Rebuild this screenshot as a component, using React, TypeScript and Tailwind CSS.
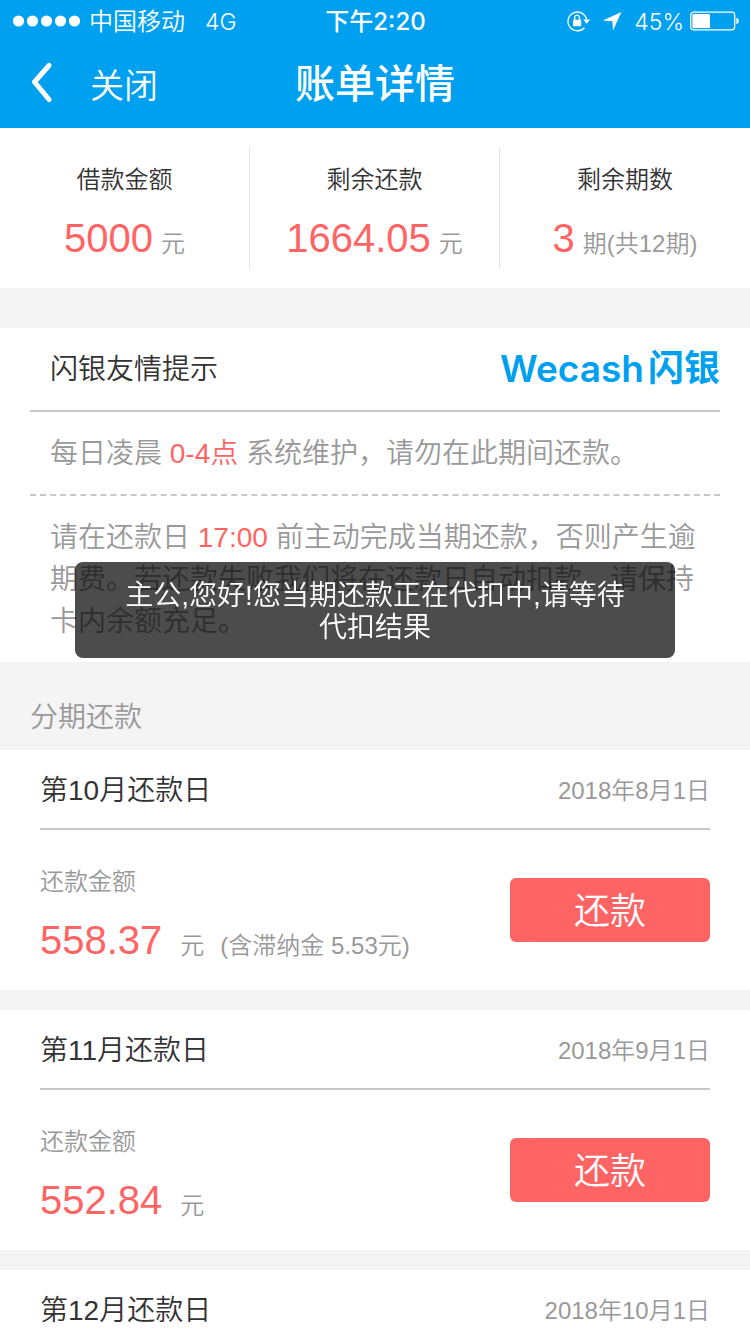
/*
 * Bill detail screen: summary, reminders and the list of monthly repayments.
 */

interface Installment {
  title: string;
  date: string;
  amount?: string;
  lateFee?: string;
}

const installments: Installment[] = [
  { title: "第10月还款日", date: "2018年8月1日", amount: "558.37", lateFee: "5.53" },
  { title: "第11月还款日", date: "2018年9月1日", amount: "552.84" },
  { title: "第12月还款日", date: "2018年10月1日" },
];

const summary = [
  { label: "借款金额", value: "5000", unit: "元" },
  { label: "剩余还款", value: "1664.05", unit: "元" },
  { label: "剩余期数", value: "3", unit: "期(共12期)" },
];

function StatusBar() {
  return (
    <div className="grid h-10 grid-cols-3 items-center pr-[11px] pl-3 text-2xl leading-10">
      <div className="flex items-center whitespace-nowrap">
        <svg className="mr-2 h-3 w-[69px]" viewBox="0 0 69 12" fill="currentColor" aria-hidden="true">
          <circle cx="6.5" cy="6" r="5.6" />
          <circle cx="20.5" cy="6" r="5.6" />
          <circle cx="34.5" cy="6" r="5.6" />
          <circle cx="48.5" cy="6" r="5.6" />
          <circle cx="62.5" cy="6" r="5.6" />
        </svg>
        <span className="pt-0.5">中国移动</span>
        <span className="ml-5 pt-0.5 font-['Inter','Noto_Sans_CJK_SC',sans-serif] text-[23px]">4G</span>
      </div>
      <div className="pt-0.5 text-center font-['Inter','Noto_Sans_CJK_SC',sans-serif] text-2xl leading-10 font-medium">
        下午2:20
      </div>
      <div className="flex items-center justify-end whitespace-nowrap">
        {/* rotation lock */}
        <svg className="mr-3 h-6 w-6 shrink-0" viewBox="0 0 24 24" fill="none" aria-hidden="true">
          <path d="M18.4 18.7A9.4 9.4 0 1 1 20.6 10.6" stroke="currentColor" strokeWidth="1.3" />
          <path d="M17.2 10.6h7l-3.5 4.2z" fill="currentColor" />
          <rect x="7" y="10.8" width="8.2" height="6.4" rx="0.6" fill="currentColor" />
          <path d="M8.7 11V8.6a2.4 2.4 0 0 1 4.8 0V11" stroke="currentColor" strokeWidth="1.3" />
        </svg>
        {/* location arrow */}
        <svg className="mr-3 h-5 w-5 shrink-0" viewBox="0 0 20 20" fill="currentColor" aria-hidden="true">
          <path d="M19.4 1L.8 9.6l9.6.6.6 9.4z" />
        </svg>
        <span className="pt-0.5 font-['Inter',sans-serif] text-[23px] font-light">45%</span>
        <svg className="ml-1.5 h-5 w-[49px] shrink-0" viewBox="0 0 49 20" fill="none" aria-hidden="true">
          <rect x="0.7" y="1.2" width="44" height="17.6" rx="3" stroke="currentColor" strokeWidth="1.3" />
          <rect x="2.4" y="3" width="17.6" height="14" rx="1.2" fill="currentColor" />
          <path d="M46.4 6.8c1.4.4 2.4 1.6 2.4 3.2s-1 2.8-2.4 3.2z" fill="currentColor" />
        </svg>
      </div>
    </div>
  );
}

function NavBar() {
  return (
    <nav className="grid h-[88px] grid-cols-3 items-center">
      <div className="flex items-center pl-7">
        <button type="button" aria-label="返回">
          <svg className="h-11 w-7" viewBox="0 0 28 44" fill="none" aria-hidden="true">
            <path
              d="M21 3.5L6.5 20 21 37.5"
              stroke="currentColor"
              strokeWidth="5"
              strokeLinecap="round"
              strokeLinejoin="round"
            />
          </svg>
        </button>
        <button type="button" className="ml-[34px] pt-1 text-[34px] leading-[44px]">
          关闭
        </button>
      </div>
      <h1 className="text-center text-[40px] leading-[48px] font-medium">账单详情</h1>
    </nav>
  );
}

function Summary() {
  return (
    <section className="bg-white py-5">
      <dl className="grid grid-cols-3 divide-x divide-[#e2e2e2]">
        {summary.map((item) => (
          <div key={item.label} className="flex h-[120px] flex-col items-center pt-3">
            <dt className="text-2xl leading-10 text-[#333]">{item.label}</dt>
            <dd className="mt-3.5 leading-[48px] whitespace-nowrap text-[#999]">
              <span className="text-[40px] text-[#ff6464]">{item.value}</span>
              <span className="ml-2 text-2xl">{item.unit}</span>
            </dd>
          </div>
        ))}
      </dl>
    </section>
  );
}

function Tips() {
  return (
    <section className="mt-10 bg-white px-[30px] text-[28px] text-[#999]">
      <div className="flex h-[84px] items-center justify-between border-b-2 border-[#c8c8c8] pl-5">
        <h2 className="pt-0.5 text-[#333]">闪银友情提示</h2>
        <div className="flex items-center whitespace-nowrap text-[#00a0f0]">
          <span className="font-['Inter',sans-serif] text-[37px] leading-10 font-semibold">Wecash</span>
          <span className="ml-1 text-[36px] leading-10 font-bold">闪银</span>
        </div>
      </div>
      <p className="border-b-2 border-dashed border-[#c8c8c8] px-5 pt-[21px] pb-[19px] leading-[42px]">
        每日凌晨 <span className="text-[#ff6464]">0-4点</span> 系统维护，请勿在此期间还款。
      </p>
      <p className="px-5 pt-[21px] pb-[19px] leading-[42px]">
        请在还款日 <span className="text-[#ff6464]">17:00</span>{" "}
        前主动完成当期还款，否则产生逾期费。若还款失败我们将在还款日自动扣款，请保持卡内余额充足。
      </p>
    </section>
  );
}

function InstallmentCard({ item }: { item: Installment }) {
  return (
    <li className="bg-white px-10">
      <div className="flex h-20 items-center justify-between border-b-2 border-[#c8c8c8] pt-1">
        <h3 className="text-[28px] text-[#333]">{item.title}</h3>
        <time className="text-2xl text-[#999]">{item.date}</time>
      </div>
      {item.amount && (
        <div className="flex h-40 items-center justify-between text-2xl text-[#999]">
          <div className="pt-3">
            <p className="leading-10">还款金额</p>
            <p className="mt-3.5 leading-[48px] whitespace-nowrap">
              <span className="text-[40px] text-[#ff6464]">{item.amount}</span>
              <span className="ml-[18px]">元</span>
              {item.lateFee && <span className="ml-4">(含滞纳金 {item.lateFee}元)</span>}
            </p>
          </div>
          <button type="button" className="h-16 w-[200px] rounded-md bg-[#ff6464] pt-1 text-4xl text-white">
            还款
          </button>
        </div>
      )}
    </li>
  );
}

export default function App() {
  return (
    <div className="min-h-screen bg-[#f4f4f4] font-['Liberation_Sans','Noto_Sans_CJK_SC',sans-serif] font-[350]">
      <header className="bg-[#00a0f0] text-white">
        <StatusBar />
        <NavBar />
      </header>
      <main>
        <Summary />
        <Tips />
        <h2 className="px-[30px] pt-[35px] pb-[11px] text-[28px] leading-[42px] text-[#999]">分期还款</h2>
        <ul className="flex flex-col gap-5">
          {installments.map((item) => (
            <InstallmentCard key={item.title} item={item} />
          ))}
        </ul>
      </main>
      <div
        role="status"
        className="fixed inset-x-[10%] top-[562px] rounded-lg bg-black/70 px-10 pt-[18px] pb-3.5 text-center text-[28px] leading-8 text-white"
      >
        主公,您好!您当期还款正在代扣中,请等待代扣结果
      </div>
    </div>
  );
}
